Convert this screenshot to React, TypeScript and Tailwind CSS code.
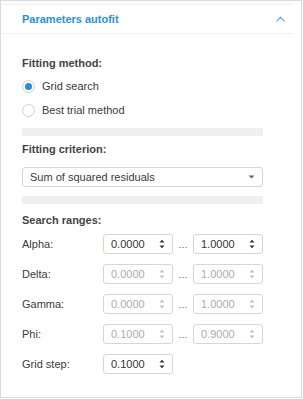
import React, { useState } from 'react';

type Range = { name: string; from: string; to: string; enabled: boolean };

const ranges: Range[] = [
  { name: 'Alpha:', from: '0.0000', to: '1.0000', enabled: true },
  { name: 'Delta:', from: '0.0000', to: '1.0000', enabled: false },
  { name: 'Gamma:', from: '0.0000', to: '1.0000', enabled: false },
  { name: 'Phi:', from: '0.1000', to: '0.9000', enabled: false },
];

const Spinner: React.FC<{ value: string; enabled: boolean }> = ({ value, enabled }) => (
  <div className="flex h-[20px] w-[70px] items-center justify-between rounded-[3px] border border-[#d6d6d6] bg-white pl-[7px] pr-[7px]">
    <span className={enabled ? 'text-[#333]' : 'text-[#ababab]'}>{value}</span>
    <svg width="6" height="12" viewBox="0 0 6 12" className={enabled ? 'text-[#333]' : 'text-[#bdbdbd]'}>
      <path d="M0.5 4.5 L3 1.8 L5.5 4.5 Z" fill="currentColor" />
      <path d="M0.5 7.5 L3 10.2 L5.5 7.5 Z" fill="currentColor" />
    </svg>
  </div>
);

const Radio: React.FC<{ label: string; checked: boolean; onClick: () => void }> = ({ label, checked, onClick }) => (
  <label className="flex h-[24px] cursor-pointer items-center gap-[7px]" onClick={onClick}>
    <span className="flex h-[13px] w-[13px] items-center justify-center rounded-full border border-[#d0d0d0] bg-white">
      {checked && <span className="h-[7px] w-[7px] rounded-full bg-[#2b8ad2]" />}
    </span>
    <span>{label}</span>
  </label>
);

const App: React.FC = () => {
  const [method, setMethod] = useState('grid');

  return (
    <div className="h-[398px] w-[302px] border border-[#dadada] bg-white pt-[3px] text-[11px] leading-[16px] text-[#3a3a3a] [font-family:'Liberation_Sans',Arial,sans-serif]">
      <div className="flex h-[30px] w-[292px] items-center justify-between border-y border-[#efefef] pl-[21px] pr-[8px]">
        <span className="font-bold text-[#2b8fd6]">Parameters autofit</span>
        <svg width="9" height="6" viewBox="0 0 9 6" fill="none" stroke="#3d95d8" strokeWidth="1.1">
          <path d="M0.5 5.5 L4.5 1.2 L8.5 5.5" />
        </svg>
      </div>

      <div className="w-[262px] pl-[21px] pt-[21px]">
        <div className="font-bold text-[#444]">Fitting method:</div>
        <div className="mt-[3px]">
          <Radio label="Grid search" checked={method === 'grid'} onClick={() => setMethod('grid')} />
          <Radio label="Best trial method" checked={method === 'best'} onClick={() => setMethod('best')} />
        </div>
        <div className="mt-[6px] h-[8px] bg-[#efefef]" />

        <div className="mt-[5px] font-bold text-[#444]">Fitting criterion:</div>
        <div className="mt-[10px] flex h-[20px] items-center justify-between rounded-[3px] border border-[#d6d6d6] pl-[7px] pr-[7px]">
          <span>Sum of squared residuals</span>
          <svg width="7" height="4" viewBox="0 0 7 4">
            <path d="M0.5 0.5 L6.5 0.5 L3.5 3.5 Z" fill="#666" />
          </svg>
        </div>
        <div className="mt-[9px] h-[8px] bg-[#efefef]" />

        <div className="mt-[8px] font-bold text-[#444]">Search ranges:</div>
        <div className="mt-[6px] flex flex-col gap-[10px]">
          {ranges.map((r) => (
            <div key={r.name} className="flex items-center">
              <span className="w-[81px]">{r.name}</span>
              <Spinner value={r.from} enabled={r.enabled} />
              <span className="flex w-[20px] items-end justify-center gap-[1.5px] self-stretch pb-[6px]">
                <span className="h-[1px] w-[1.5px] bg-[#aaa]" />
                <span className="h-[1px] w-[1.5px] bg-[#aaa]" />
                <span className="h-[1px] w-[1.5px] bg-[#aaa]" />
              </span>
              <Spinner value={r.to} enabled={r.enabled} />
            </div>
          ))}
          <div className="flex items-center">
            <span className="w-[81px]">Grid step:</span>
            <Spinner value="0.1000" enabled />
          </div>
        </div>
      </div>
    </div>
  );
};

export default App;
